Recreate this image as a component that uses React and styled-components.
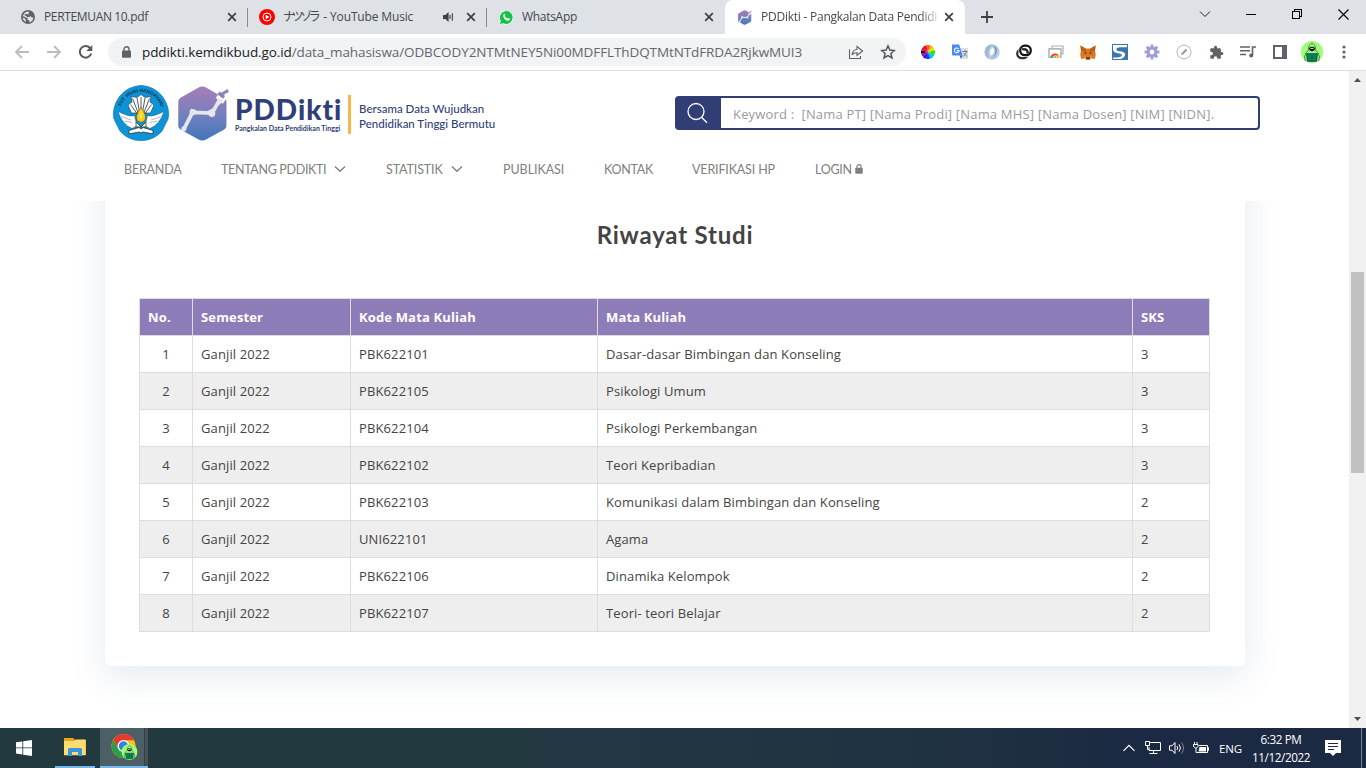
import React from "react";
import styled, { createGlobalStyle, css } from "styled-components";

const GlobalStyle = createGlobalStyle`
  * { box-sizing: border-box; }
  html, body { margin: 0; padding: 0; overflow: hidden; background: #fff; }
  svg { display: block; flex: none; }
`;

const ui = css`
  font-family: "Open Sans", "Noto Sans CJK JP", sans-serif;
`;

const Desktop = styled.div`
  ${ui}
  width: 1366px;
  height: 768px;
  display: flex;
  flex-direction: column;
  overflow: hidden;
  background: #fff;
`;

/* ---------- browser chrome ---------- */

const TabStrip = styled.div`
  display: flex;
  height: 34px;
  flex: none;
  padding-left: 8px;
  background: #dee1e6;
`;

const Tab = styled.div`
  position: relative;
  display: flex;
  align-items: center;
  width: ${(p) => p.$width}px;
  height: 34px;
  padding: 0 11px 0 ${(p) => p.$pad}px;
  border-radius: ${(p) => (p.$active ? "8px 8px 0 0" : "0")};
  background: ${(p) => (p.$active ? "#fff" : "transparent")};
  &::after {
    content: "";
    display: ${(p) => (p.$line ? "block" : "none")};
    position: absolute;
    right: 0;
    top: 8px;
    width: 1px;
    height: 19px;
    background: #85888d;
  }
`;

const TabTitle = styled.span`
  flex: 1;
  margin-left: ${(p) => p.$gap}px;
  white-space: nowrap;
  font-size: 12px;
  line-height: 18px;
  letter-spacing: ${(p) => p.$ls || 0}px;
  color: #45494d;
  ${(p) =>
    p.$fade &&
    css`
      mask-image: linear-gradient(90deg, #000 87%, transparent 99%);
    `}
`;

const Kana = styled.span`
  letter-spacing: -3.4px;
  margin-right: 3px;
`;

const TabAudio = styled.span`
  margin-right: 12px;
`;

const NewTab = styled.div`
  display: flex;
  align-items: center;
  padding-left: 16px;
`;

const WindowControls = styled.div`
  display: flex;
  margin-left: auto;
`;

const WindowButton = styled.div`
  display: flex;
  align-items: center;
  justify-content: center;
  width: 46px;
  height: 28px;
`;

const Toolbar = styled.div`
  display: flex;
  align-items: center;
  height: 37px;
  flex: none;
  padding: 0 6px 0 14px;
  border-bottom: 1px solid #dadce0;
  background: #fff;
`;

const NavButtons = styled.div`
  display: flex;
  gap: 16px;
  width: 94px;
`;

const AddressBar = styled.div`
  display: flex;
  align-items: center;
  width: 798px;
  height: 28px;
  padding: 0 10px 0 10px;
  border-radius: 14px;
  background: #f1f3f4;
`;

const LockSlot = styled.div`
  display: flex;
  width: 16px;
  justify-content: center;
`;

const Url = styled.span`
  flex: 1;
  margin-left: 8px;
  white-space: nowrap;
  font-size: 13.5px;
  line-height: 20px;
  letter-spacing: -0.1px;
  color: #64686d;
`;

const Host = styled.span`
  color: #202124;
`;

const AddressActions = styled.div`
  display: flex;
  gap: 16px;
`;

const Extensions = styled.div`
  display: flex;
  margin-left: 6px;
`;

const Slot = styled.div`
  display: flex;
  align-items: center;
  justify-content: center;
  width: 32px;
  height: 28px;
`;

/* ---------- page ---------- */

const Viewport = styled.div`
  display: flex;
  height: 657px;
  flex: none;
`;

const Page = styled.div`
  display: flex;
  flex-direction: column;
  width: 1349px;
  overflow: hidden;
`;

const SiteHeader = styled.header`
  height: 130px;
  flex: none;
  padding: 12px 89px 0 112px;
  background: #fff;
`;

const BrandRow = styled.div`
  display: flex;
  height: 60px;
`;

const Brand = styled.div`
  display: flex;
  align-items: center;
  gap: 7px;
`;

const BrandName = styled.div`
  display: flex;
  justify-content: space-between;
  align-items: center;
  width: 116px;
  height: 60px;
  margin-left: -2px;
  white-space: nowrap;
  color: #313f78;
  font-family: Lato, sans-serif;
`;

const BrandRule = styled.div`
  width: 3px;
  height: 39px;
  margin-top: 2px;
  background: #fbb64b;
`;

const BrandTitle = styled.div`
  font-size: 28px;
  line-height: 30px;
  font-weight: 900;
  letter-spacing: 1px;
`;

const BrandSub = styled.div`
  font-size: 7px;
  line-height: 9px;
  font-weight: 700;
`;

const Slogan = styled.div`
  padding-top: 5px;
  margin-left: 1px;
  white-space: nowrap;
  font-family: Lato, sans-serif;
  font-size: 11.5px;
  line-height: 15px;
  font-weight: 500;
  color: #313f78;
`;

const Search = styled.div`
  display: flex;
  width: 585px;
  height: 34px;
  margin: 13px 0 0 auto;
  border: 2px solid #313e76;
  border-radius: 4px;
  background: #fff;
`;

const SearchButton = styled.div`
  display: flex;
  align-items: center;
  width: 44px;
  padding-left: 10px;
  background: #313e76;
`;

const Placeholder = styled.span`
  padding-left: 12px;
  white-space: pre;
  font-size: 13px;
  line-height: 32px;
  letter-spacing: 0.18px;
  color: #9b9b9b;
`;

const Menu = styled.nav`
  display: flex;
  gap: 40px;
  padding: 16px 0 0 12px;
`;

const MenuItem = styled.div`
  display: flex;
  align-items: center;
  justify-content: space-between;
  width: ${(p) => p.$width}px;
  height: 20px;
  white-space: nowrap;
  font-family: Lato, sans-serif;
  font-size: 12.5px;
  letter-spacing: ${(p) => p.$ls}px;
  color: #808080;
`;

const Content = styled.main`
  flex: 1;
  overflow: hidden;
  padding-left: 105px;
`;

const Card = styled.section`
  width: 1140px;
  height: 525px;
  margin-top: -60px;
  padding: 77px 34px 0;
  border-radius: 5px;
  background: #fff;
  box-shadow: 0 10px 36px rgba(65, 105, 150, 0.14);
`;

const Title = styled.h2`
  margin: 0 0 47px;
  text-align: center;
  font-family: Lato, sans-serif;
  font-size: 24px;
  line-height: 33px;
  font-weight: 700;
  letter-spacing: 0.8px;
  color: #444;
`;

const Table = styled.table`
  width: 1071px;
  table-layout: fixed;
  border-collapse: collapse;
  font-size: 13px;
  line-height: 20px;
  color: #444;
`;

const Column = styled.col`
  width: ${(p) => p.$width}px;
`;

const cell = css`
  height: 37px;
  padding: 0 8px;
  border: 1px solid #dddddd;
  white-space: nowrap;
`;

const HeadCell = styled.th`
  ${cell}
  text-align: left;
  font-weight: 700;
  letter-spacing: 0.15px;
  color: #fff;
  background: #8c7db9;
`;

const Row = styled.tr`
  background: ${(p) => (p.$striped ? "#eeeeee" : "#fff")};
`;

const Cell = styled.td`
  ${cell}
  text-align: ${(p) => (p.$center ? "center" : "left")};
  letter-spacing: 0.12px;
`;

const Scrollbar = styled.div`
  display: flex;
  flex-direction: column;
  align-items: center;
  width: 17px;
  padding: 7px 0 7px;
  background: #f1f1f1;
`;

const Thumb = styled.div`
  width: 13px;
  height: 201px;
  margin: 190px 0 auto;
  background: #c1c1c1;
`;

/* ---------- taskbar ---------- */

const Taskbar = styled.div`
  display: flex;
  height: 40px;
  flex: none;
  background: linear-gradient(90deg, #21383f 0%, #22393f 38%, #223743 40%, #1f3241 68%, #1c2b42 80%, #1b2944 84%, #1b2942 100%);
`;

const TaskButton = styled.div`
  display: flex;
  align-items: center;
  justify-content: center;
  width: ${(p) => p.$width}px;
  height: 40px;
  padding-left: ${(p) => (p.$active ? 2 : 0)}px;
  margin-left: ${(p) => p.$gap || 0}px;
  background: ${(p) => (p.$active ? "linear-gradient(90deg, #4d5f66 44px, #343f45 44px, #343f45 45px, #455358 45px)" : "none")};
  border-bottom: ${(p) => (p.$open ? "2px solid #76b9ed" : "0")};
`;

const Tray = styled.div`
  display: flex;
  align-items: center;
  margin-left: auto;
  color: #fff;
`;

const TrayIcon = styled.div`
  margin-right: ${(p) => p.$gap}px;
`;

const Language = styled.span`
  width: 32px;
  font-size: 11.5px;
  letter-spacing: -0.2px;
`;

const Clock = styled.div`
  width: 60px;
  margin-right: 14px;
  text-align: center;
  white-space: nowrap;
  font-size: 11.7px;
  line-height: 18px;
  letter-spacing: -0.38px;
`;

const ShowDesktop = styled.div`
  width: 5px;
  height: 40px;
  margin-left: 20px;
  border-left: 1px solid #76808f;
`;

/* ---------- icons ---------- */

const Globe = () => (
  <svg width="14" height="14" viewBox="0 0 14 14">
    <circle cx="7" cy="7" r="7" fill="#5f6368" />
    <path d="M7.6 1.6 8 3.4 6.5 4.6 7 6.2 9.6 6 10.6 7.6 12.4 7.4C12.3 9.8 10.6 11.8 8.4 12.3L8.2 10.6 6.6 9.6 6.4 8 2 6.2C2.4 3.8 4.6 1.5 7.6 1.6z" fill="#dee1e6" />
    <path d="M1.6 7.6 4.4 8.8 5 12Q2 11 1.6 7.6z" fill="#dee1e6" />
    <path d="M3 4.8 6.8 7.2 9.4 6.6 7.4 4.6 5 4z" fill="#5f6368" />
  </svg>
);

const TabClose = () => (
  <svg width="10" height="10" viewBox="0 0 10 10">
    <path d="M1.2 1.2 8.8 8.8M8.8 1.2 1.2 8.8" stroke="#3c4043" strokeWidth="1.7" />
  </svg>
);

const MusicLogo = () => (
  <svg width="16" height="16" viewBox="0 0 16 16">
    <circle cx="8" cy="8" r="8" fill="#f00" />
    <circle cx="8" cy="8" r="4" fill="none" stroke="#fff" strokeWidth="1" />
    <path d="M6.7 5.8 10.4 8 6.7 10.2z" fill="#fff" />
  </svg>
);

const AudioIcon = () => (
  <svg width="11" height="12" viewBox="0 0 11 12">
    <path d="M0 4h2.4L5.6 1v10L2.4 8H0z" fill="#3c4043" />
    <path d="M7 4v4M9.3 2.3v7.4" stroke="#3c4043" strokeWidth="1.1" />
  </svg>
);

const WhatsAppLogo = () => (
  <svg width="15" height="15" viewBox="0 0 15 15">
    <path d="M.2 14.8 1.2 11A7 7 0 1 1 4 13.8z" fill="#fff" />
    <path d="M1 14 1.8 10.8A6.4 6.4 0 1 1 4.4 13.200z" fill="#13c443" />
    <path d="M4.6 4.2C5.3 3.4 5.8 3.7 6.3 5.2L5.8 6.1Q6.6 7.7 8.4 8.6L9.3 7.9 11 8.8C11 10.5 9.3 11.1 7.6 10.4 5.4 9.4 3.6 6.8 4.6 4.2z" fill="#fff" />
  </svg>
);

const HexMark = ({ width, height }) => (
  <svg width={width} height={height} viewBox="0 0 52 56">
    <defs>
      <linearGradient id="hex" x1="0" y1="0" x2="0" y2="1">
        <stop offset="0" stopColor="#a67eb7" />
        <stop offset="0.55" stopColor="#7280bd" />
        <stop offset="1" stopColor="#3f75ba" />
      </linearGradient>
    </defs>
    <path d="M21 1.600q3.800-2.200 7.600 0L41 8.600 38.500 12l7.200 6 3-4.500q.7 1.200.7 2.700v24q0 2.600-2.300 4L28.600 54.400q-3.800 2.200-7.600 0L2.600 44.200Q.3 42.800.3 40.200V16q0-2.700 2.300-4.100z" fill="url(#hex)" />
    <path d="m42.800 9.400 8.400-5" stroke="#9b81ba" strokeWidth="3.200" />
    <path d="M41.300 7 47 11.600" stroke="#8b80bb" strokeWidth="3.400" />
    <path d="M6 43.800 14.800 26.800 34.800 27.600 43 13" fill="none" stroke="#e6e6ed" strokeWidth="3.800" strokeLinejoin="round" />
    <path d="m11.500 31 2-8 7 3zM29 26l7-3.500 1.500 7.500zM39.500 18l1.500-6.500 5.500 3.500-4 4z" fill="#e6e6ed" />
    <circle cx="15" cy="26.500" r="3.200" fill="#e6e6ed" />
    <circle cx="34.500" cy="28" r="3.500" fill="#e6e6ed" />
    <circle cx="6" cy="43.500" r="2.600" fill="#e6e6ed" />
  </svg>
);

const Plus = () => (
  <svg width="12" height="12" viewBox="0 0 12 12">
    <path d="M6 0v12M0 6h12" stroke="#3c4043" strokeWidth="1.8" />
  </svg>
);

const ChevronThin = () => (
  <svg width="12" height="8" viewBox="0 0 12 8"><path d="M1 1.5 6 6.5 11 1.5" fill="none" stroke="#222" /></svg>
);
const Minimize = () => (
  <svg width="10" height="10" viewBox="0 0 10 10"><path d="M0 5.500h10" stroke="#000" /></svg>
);
const Restore = () => (
  <svg width="10" height="10" viewBox="0 0 10 10" shapeRendering="crispEdges">
    <path d="M.5 2.5h7v7h-7zM2.5 2.5v-2h7v7h-2" fill="none" stroke="#000" />
  </svg>
);
const WindowClose = () => (
  <svg width="11" height="11" viewBox="0 0 11 11"><path d="M.5.5l10 10M10.500.5l-10 10" stroke="#000" strokeWidth="1.1" /></svg>
);

const Arrow = ({ forward }) => (
  <svg width="16" height="14" viewBox="0 0 16 14">
    <path d={forward ? "M1 7h13M8 1l6 6-6 6" : "M15 7H2M8 1 2 7l6 6"} fill="none" stroke="#babcbe" strokeWidth="1.8" />
  </svg>
);

const Reload = () => (
  <svg width="16" height="14" viewBox="0 0 16 14">
    <path d="M13.2 8.5A5.8 5.8 0 1 1 12 3" fill="none" stroke="#55595e" strokeWidth="2" />
    <path d="M14.300 0v6H8.300z" fill="#55595e" />
  </svg>
);

const Padlock = ({ width, height, color }) => (
  <svg width={width} height={height} viewBox="0 0 9 12">
    <rect y="4.500" width="9" height="7.300" rx="1" fill={color} />
    <path d="M2 5V3.200a2.500 2.500 0 0 1 5 0V5" fill="none" stroke={color} strokeWidth="1.400" />
  </svg>
);

const Share = () => (
  <svg width="16" height="16" viewBox="0 0 16 16" fill="none" stroke="#5f6368" strokeWidth="1.1">
    <path d="M1.5 5.5v9h11V12" />
    <path d="M9 2.5 14.6 7 9 11.3V8.8Q5.500 8.600 4 11 4.600 5.800 9 5.200z" />
  </svg>
);

const Star = () => (
  <svg width="16" height="16" viewBox="0 0 16 16">
    <path d="M8 1.8 9.8 6.100 14.400 6.500 10.900 9.500 12 14 8 11.600 4 14 5.100 9.500 1.600 6.500 6.200 6.100z" fill="none" stroke="#55595e" strokeWidth="1.500" />
  </svg>
);

const wheelColors = ["#ff9f00", "#d9f000", "#36d900", "#00d98c", "#00b4ff", "#0044e8", "#4000dd", "#a600cf", "#111", "#f00060", "#ff0000", "#ff5a00"];
const ColorWheel = () => (
  <svg width="14" height="14" viewBox="-7 -7 14 14">
    {wheelColors.map((color, i) => (
      <path key={color} d="M0 0-1.850-6.750A7 7 0 0 1 1.850-6.750z" fill={color} transform={`rotate(${i * 30 + 30})`} />
    ))}
  </svg>
);

const Translate = () => (
  <svg width="16" height="16" viewBox="0 0 16 16">
    <path d="M6 4h10v11H9z" fill="#dcdfe3" />
    <path d="M0 .5h7.200l3.400 11H1Q0 11.500 0 10.500z" fill="#4a8af4" />
    <path d="M7.500 11.500h3.100L9 15z" fill="#3267d6" />
    <path d="M6.400 4.800A2.300 2.300 0 1 0 7 6.600H4.800" fill="none" stroke="#fff" strokeWidth="1.100" />
    <path d="M10.500 7.500h5M13 6v1.500M14.600 7.500Q13.800 11 11.400 12.200M11.400 8.800 15 12.500" fill="none" stroke="#6c7680" strokeWidth=".9" />
  </svg>
);

const Swirl = () => (
  <svg width="16" height="16" viewBox="0 0 16 16">
    <circle cx="8" cy="8" r="7.700" fill="#b6cbe0" />
    <path d="M8 .5a7.500 7.500 0 0 0-3 14Q1.800 8 8 .5z" fill="#9db7d0" />
    <path d="M8 .8Q15 3 12 10 10 14 5 14.500A7.500 7.500 0 0 0 8 .8z" fill="#6c92ba" />
    <path d="M8.800 3.500Q4 6 7 11.800 12.300 8 8.800 3.500z" fill="#fff" />
  </svg>
);

const Rings = () => (
  <svg width="16" height="16" viewBox="0 0 16 16" fill="none" strokeWidth="2.200">
    <rect x="1.200" y="5.200" width="10.600" height="9" rx="4.500" stroke="#333" />
    <rect x="4.200" y="1.600" width="10.600" height="9.600" rx="4.600" stroke="#fff" strokeWidth="3.400" />
    <rect x="4.200" y="1.600" width="10.600" height="9.600" rx="4.600" stroke="#111" />
    <path d="M6.500 5.200h1.300q4 0 4 4.200" stroke="#333" />
  </svg>
);

const RemoteDesktop = () => (
  <svg width="16" height="16" viewBox="0 0 16 16">
    <path d="M4 4V2h11v8h-2" fill="#fff" stroke="#aeb0b3" strokeWidth="1.200" />
    <path d="M1 14V4.800h12V14" fill="#fff" stroke="#999c9f" strokeWidth="1.200" />
    <path d="M2.500 14a4.600 4.600 0 0 1 9.200 0z" fill="#fbbc05" />
    <path d="M2.500 14a4.600 4.600 0 0 1 8.200-2.800H7z" fill="#ea4335" />
    <path d="M2.500 14q0-2 1-3l2 3z" fill="#34a853" />
    <path d="M5.100 14a2 2 0 0 1 4 0z" fill="#4285f4" stroke="#fff" strokeWidth=".6" />
  </svg>
);

const Fox = () => (
  <svg width="16" height="15" viewBox="0 0 16 15">
    <path d="M.5.5 6 3.500h4L15.500.5 15 6l.8 3.500-1 4.500-3.600-.8L9.500 15h-3l-1.700-1.800L1.200 14 .2 9.500 1 6z" fill="#e2761b" />
    <path d="M.5.5 6 4.500 6.500 7 1 6zM15.500.5 10 4.500 9.500 7 15 6z" fill="#b9601f" />
    <path d="m3.600 8 2.500-.7.5 2zM12.400 8l-2.500-.7-.5 2z" fill="#35384a" />
    <path d="M6 12.300h4l-.4 1.800H6.400z" fill="#4a3b35" />
    <path d="M4 10.500 6 12.300 5.300 13zM12 10.500l-2 1.800.7.7z" fill="#cbb9ad" />
  </svg>
);

const BlueS = () => (
  <svg width="16" height="16" viewBox="0 0 16 16">
    <rect width="16" height="16" fill="#3b76aa" />
    <path d="M1 1h14v2.200H9Q4.400 3 4.400 5.400 4.400 7 8.400 7.300 14 8 13 11.500 12.300 13.600 9 15H1v-1.500Q9.800 13.600 9.800 11.200 9.800 9.600 5.800 9.200 1 8.400 1 5.500z" fill="#fff" />
  </svg>
);

const Gear = () => (
  <svg width="16" height="16" viewBox="-8 -8 16 16">
    {[0, 45, 90, 135, 180, 225, 270, 315].map((angle) => (
      <rect key={angle} x="-1.500" y="-7.500" width="3" height="4" rx=".6" fill="#a5a1de" transform={`rotate(${angle})`} />
    ))}
    <circle r="3.900" fill="none" stroke="#9f9bdb" strokeWidth="3" />
  </svg>
);

const PencilCircle = () => (
  <svg width="16" height="16" viewBox="0 0 16 16">
    <circle cx="8" cy="8" r="7" fill="#fff" stroke="#b5b5b5" />
    <path d="M5 11.200 5.600 9 9.900 4.700l1.500 1.500-4.300 4.400z" fill="#999" />
  </svg>
);

const Puzzle = () => (
  <svg width="15" height="15" viewBox="0 0 24 24">
    <path d="M20.500 11H19V7c0-1.100-.9-2-2-2h-4V3.500a2.500 2.500 0 0 0-5 0V5H4c-1.100 0-1.990.9-1.990 2v3.800H3.500c1.490 0 2.700 1.210 2.700 2.700s-1.210 2.700-2.700 2.700H2V20c0 1.100.9 2 2 2h3.800v-1.500c0-1.490 1.210-2.700 2.700-2.700s2.700 1.210 2.700 2.700V22H17c1.100 0 2-.9 2-2v-4h1.500a2.500 2.500 0 0 0 0-5z" fill="#5f6368" />
  </svg>
);

const Queue = () => (
  <svg width="16" height="14" viewBox="0 0 16 14">
    <path d="M0 2h10M0 5.700h10M0 9.400h6" stroke="#5f6368" strokeWidth="1.500" />
    <path d="M12.500 10V2H16" fill="none" stroke="#5f6368" strokeWidth="1.600" />
    <circle cx="11.200" cy="10.600" r="2" fill="#5f6368" />
  </svg>
);

const SidePanel = () => (
  <svg width="14" height="14" viewBox="0 0 14 14">
    <path d="M1 1h12v12H1z" fill="#fff" stroke="#5f6368" strokeWidth="2" />
    <path d="M9 1h4v12H9z" fill="#5f6368" />
  </svg>
);

const Hacker = ({ size, x, y }) => (
  <svg x={x} y={y} width={size} height={size} viewBox="0 0 22 22">
    <circle cx="11" cy="11" r="11" fill="#9dfc79" />
    <path d="M11 2Q7 4 7.500 9.500 4.500 10.500 3.500 16L4.500 20M11 2Q15 4 14.500 9.500 17.500 10.500 18.500 16L17.500 20" fill="none" stroke="#3f7a35" strokeWidth=".9" />
    <path d="M8 7Q11 4.500 14 7L13.600 9 11 10.800 8.400 9z" fill="#111" />
    <path d="M9.300 7h3.400v.9H9.300z" fill="#f0c4a8" />
    <path d="M9.600 10.500h2.800l-1.400 1z" fill="#e8f7e2" />
    <path d="M5.600 12.700h10.800l-.8 7.600H6.400z" fill="#07815c" stroke="#06513a" strokeWidth=".9" />
    <circle cx="11" cy="16.400" r=".9" fill="#0b3e2c" />
  </svg>
);

const Dots = () => (
  <svg width="4" height="14" viewBox="0 0 4 14" fill="#5f6368">
    <circle cx="2" cy="2" r="1.600" /><circle cx="2" cy="7" r="1.600" /><circle cx="2" cy="12" r="1.600" />
  </svg>
);

const EmblemText = styled.text`
  font-family: "Liberation Sans", sans-serif;
  font-size: 4.8px;
  font-weight: 700;
  text-anchor: middle;
  fill: #12313f;
`;

const Emblem = () => (
  <svg width="58" height="58" viewBox="0 0 58 58">
    <defs><path id="arc" d="M10.500 39A21 21 0 1 1 47.500 39" /></defs>
    <path d="M29 1.400Q43 2.500 50.500 12.500 58.500 24 56 35L50 47Q42 56.500 29 56.600 16 56.500 8 47L2 35Q-.5 24 7.500 12.500 15 2.500 29 1.400z" fill="#0d93d8" stroke="#147fae" strokeWidth=".8" />
    <EmblemText><textPath href="#arc" startOffset="50%">TUT WURI HANDAYANI</textPath></EmblemText>
    <path d="M29 10.500 33 13.500 39 12.500 38 18 42 21 38.500 29H19.500L16 21l4-3-1-5.500 6 1z" fill="#fff" stroke="#243944" strokeWidth=".6" />
    <path d="M29 13v17M25 14l3 17M33 14l-3 17M20.500 14.500 27 31M37.500 14.500 31 31M18.500 20.500 26 31M39.500 20.500 32 31" stroke="#27333a" strokeWidth=".8" />
    <path d="M6 27.500 13 30.500Q19 33 22.500 31.500L25 42 20 44.500Q10 40.500 6 27.500zM52 27.500 45 30.500Q39 33 35.500 31.500L33 42l5 2.500Q48 40.500 52 27.500z" fill="#fff" stroke="#184c61" strokeWidth=".5" />
    <path d="M9 32.500 19 36M12 37l8 1.500M49 32.500 39 36M46 37l-8 1.500" stroke="#5a7986" strokeWidth=".5" />
    <path d="M29 23.500Q35 31 33 36q-4 4.500-8 0-2-5 4-12.500z" fill="#f8cf19" stroke="#705817" strokeWidth=".7" />
    <path d="M29 27q2 6 0 8-2-2 0-8z" fill="#ffe95d" />
    <path d="m24 38 5 5 5-5v5h-10z" fill="#f8e6a4" stroke="#333" strokeWidth=".7" />
    <path d="M17 46.500 27 43.500 29 45l2-1.500 10 3v3.300L30.500 48 29 49l-1.500-1L17 49.800z" fill="#fff" stroke="#222" strokeWidth=".7" />
  </svg>
);

const Magnifier = () => (
  <svg width="22" height="22" viewBox="0 0 22 22" fill="none" stroke="#fff" strokeWidth="1.300">
    <circle cx="9" cy="9.500" r="8" /><path d="m14.800 15.500 5.200 5.200" />
  </svg>
);

const MenuChevron = () => (
  <svg width="12" height="8" viewBox="0 0 12 8"><path d="M1 1.500 6 6.300 11 1.500" fill="none" stroke="#808080" strokeWidth="1.400" /></svg>
);

const ScrollArrow = ({ down }) => (
  <svg width="7" height="4" viewBox="0 0 7 4"><path d={down ? "M0 0h7L3.500 4z" : "M0 4h7L3.500 0z"} fill="#505050" /></svg>
);

const WindowsLogo = () => (
  <svg width="16" height="16" viewBox="0 0 16 16" fill="#fff">
    <path d="M0 2.300 6.400 1.400V7.400H0zM7.200 1.300 16 0v7.400H7.200zM0 8.300h6.400v6.100L0 13.500zM7.200 8.300H16V16l-8.800-1.300z" />
  </svg>
);

const Folder = () => (
  <svg width="22" height="18" viewBox="0 0 22 18">
    <path d="M0 0h9l1.500 1.500H21.500V17H0z" fill="#e8a81c" />
    <path d="M0 3h10l2-1.300h9.800V17.300H0z" fill="#ffdc70" />
    <path d="M4 18v-6.800q0-1.200 1.200-1.200h11.600Q18 10 18 11.200V18h-4v-4H8v4z" fill="#3a96dd" />
  </svg>
);

const ChromeLogo = () => (
  <svg width="28" height="26" viewBox="0 0 28 26">
    <circle cx="12.500" cy="12" r="12" fill="#fbc116" />
    <path d="M12.500 0A12 12 0 0 1 23 6.300H12.500l-5 8.500L2.200 5.900A12 12 0 0 1 12.500 0z" fill="#e33b2e" />
    <path d="M2.100 6A12 12 0 0 0 12 24l5.200-9.200H7.500z" fill="#2a9e49" />
    <circle cx="12.500" cy="12" r="6" fill="#fff" />
    <circle cx="12.500" cy="12" r="4.700" fill="#337fe8" />
    <Hacker x="10.500" y="10" size={16} />
  </svg>
);

const TrayChevron = () => (
  <svg width="12" height="8" viewBox="0 0 12 8"><path d="M.5 6.800 6 1.300l5.500 5.500" fill="none" stroke="#fff" strokeWidth="1.200" /></svg>
);
const Network = () => (
  <svg width="16" height="14" viewBox="0 0 16 14" fill="none" stroke="#fff">
    <path d="M5 1.500h10.500v8H4V6M4.500 12.500h8M8.500 9.500v3M.5.500h4v4h-4zM2.500 4.500v4h2" />
  </svg>
);
const Speaker = () => (
  <svg width="17" height="14" viewBox="0 0 17 14" fill="none" stroke="#fff">
    <path d="M.5 4.800H3L6 1.500v11L3 9.200H.5z" />
    <path d="M8 5q1.400 2 0 4M10 3.300q3 3.700 0 7.400" />
    <path d="M12.500 1.500q4 5.500 0 11" stroke="#7c8696" />
  </svg>
);
const Battery = () => (
  <svg width="16" height="13" viewBox="0 0 16 13">
    <path d="M6 3.500h8.500v7H5.500M14.500 5.500h1v3h-1" fill="none" stroke="#fff" />
    <path d="M6.500 5h6.500v4.500H5.500z" fill="#fff" />
    <path d="M1.500 0v2.500M4 0v2.500M.5 2.500h4.500v2L3.500 6h-1L.5 4.500zM3 6v4.500h3" fill="none" stroke="#fff" />
  </svg>
);
const Notification = () => (
  <svg width="16" height="16" viewBox="0 0 16 16">
    <path d="M0 0h16v13h-5l-3 3-3-3H0z" fill="#fff" />
    <path d="M3 3.500h10M3 6.500h10M3 9.500h6" stroke="#1b2944" />
  </svg>
);

/* ---------- data ---------- */

const columns = [
  { label: "No.", width: 53 },
  { label: "Semester", width: 158 },
  { label: "Kode Mata Kuliah", width: 247 },
  { label: "Mata Kuliah", width: 535 },
  { label: "SKS", width: 77 },
];

const courses = [
  ["PBK622101", "Dasar-dasar Bimbingan dan Konseling", 3],
  ["PBK622105", "Psikologi Umum", 3],
  ["PBK622104", "Psikologi Perkembangan", 3],
  ["PBK622102", "Teori Kepribadian", 3],
  ["PBK622103", "Komunikasi dalam Bimbingan dan Konseling", 2],
  ["UNI622101", "Agama", 2],
  ["PBK622106", "Dinamika Kelompok", 2],
  ["PBK622107", "Teori- teori Belajar", 2],
];

const menu = [
  { label: "BERANDA", width: 57, ls: -0.2 },
  { label: "TENTANG PDDIKTI", width: 125, ls: -0.33, dropdown: true },
  { label: "STATISTIK", width: 77, ls: -0.12, dropdown: true },
  { label: "PUBLIKASI", width: 61, ls: -0.05 },
  { label: "KONTAK", width: 48, ls: -0.25 },
  { label: "VERIFIKASI HP", width: 83, ls: -0.15 },
  { label: "LOGIN", width: 48, ls: -0.3, lock: true },
];

const extensionIcons = [ColorWheel, Translate, Swirl, Rings, RemoteDesktop, Fox, BlueS, Gear, PencilCircle, Puzzle, Queue, SidePanel];
const windowIcons = [ChevronThin, Minimize, Restore, WindowClose];

export default function App() {
  return (
    <Desktop>
      <GlobalStyle />
      <TabStrip>
        <Tab $width={240} $pad={13} $line>
          <Globe />
          <TabTitle $gap={9} $ls={-0.35}>PERTEMUAN 10.pdf</TabTitle>
          <TabClose />
        </Tab>
        <Tab $width={239} $pad={11} $line>
          <MusicLogo />
          <TabTitle $gap={8} $ls={-0.15}><Kana>ナツゾラ</Kana> - YouTube Music</TabTitle>
          <TabAudio><AudioIcon /></TabAudio>
          <TabClose />
        </Tab>
        <Tab $width={238} $pad={12}>
          <WhatsAppLogo />
          <TabTitle $gap={8} $ls={-0.3}>WhatsApp</TabTitle>
          <TabClose />
        </Tab>
        <Tab $width={240} $pad={13} $active>
          <HexMark width={14} height={15} />
          <TabTitle $gap={9} $ls={-0.24} $fade>PDDikti - Pangkalan Data Pendidi</TabTitle>
          <TabClose />
        </Tab>
        <NewTab><Plus /></NewTab>
        <WindowControls>
          {windowIcons.map((Icon, i) => (
            <WindowButton key={i}><Icon /></WindowButton>
          ))}
        </WindowControls>
      </TabStrip>
      <Toolbar>
        <NavButtons>
          <Arrow />
          <Arrow forward />
          <Reload />
        </NavButtons>
        <AddressBar>
          <LockSlot><Padlock width={9} height={12} color="#5f6368" /></LockSlot>
          <Url><Host>pddikti.kemdikbud.go.id</Host>/data_mahasiswa/ODBCODY2NTMtNEY5Ni00MDFFLThDQTMtNTdFRDA2RjkwMUI3</Url>
          <AddressActions><Share /><Star /></AddressActions>
        </AddressBar>
        <Extensions>
          {extensionIcons.map((Icon, i) => (
            <Slot key={i}><Icon /></Slot>
          ))}
          <Slot><Hacker size={22} /></Slot>
          <Slot><Dots /></Slot>
        </Extensions>
      </Toolbar>
      <Viewport>
        <Page>
          <SiteHeader>
            <BrandRow>
              <Brand>
                <Emblem />
                <HexMark width={53} height={55} />
                <BrandName>
                  <div>
                    <BrandTitle>PDDikti</BrandTitle>
                    <BrandSub>Pangkalan Data Pendidikan Tinggi</BrandSub>
                  </div>
                  <BrandRule />
                </BrandName>
                <Slogan>Bersama Data Wujudkan<br />Pendidikan Tinggi Bermutu</Slogan>
              </Brand>
              <Search>
                <SearchButton><Magnifier /></SearchButton>
                <Placeholder>{"Keyword :  [Nama PT] [Nama Prodi] [Nama MHS] [Nama Dosen] [NIM] [NIDN]."}</Placeholder>
              </Search>
            </BrandRow>
            <Menu>
              {menu.map((item) => (
                <MenuItem key={item.label} $width={item.width} $ls={item.ls}>
                  {item.label}
                  {item.dropdown && <MenuChevron />}
                  {item.lock && <Padlock width={8} height={10} color="#808080" />}
                </MenuItem>
              ))}
            </Menu>
          </SiteHeader>
          <Content>
            <Card>
              <Title>Riwayat Studi</Title>
              <Table>
                <colgroup>
                  {columns.map((c) => <Column key={c.label} $width={c.width} />)}
                </colgroup>
                <thead>
                  <tr>{columns.map((c) => <HeadCell key={c.label}>{c.label}</HeadCell>)}</tr>
                </thead>
                <tbody>
                  {courses.map(([code, name, credits], i) => (
                    <Row key={code} $striped={i % 2 === 1}>
                      <Cell $center>{i + 1}</Cell>
                      <Cell>Ganjil 2022</Cell>
                      <Cell>{code}</Cell>
                      <Cell>{name}</Cell>
                      <Cell>{credits}</Cell>
                    </Row>
                  ))}
                </tbody>
              </Table>
            </Card>
          </Content>
        </Page>
        <Scrollbar>
          <ScrollArrow />
          <Thumb />
          <ScrollArrow down />
        </Scrollbar>
      </Viewport>
      <Taskbar>
        <TaskButton $width={48}><WindowsLogo /></TaskButton>
        <TaskButton $width={40} $gap={7} $open><Folder /></TaskButton>
        <TaskButton $width={48} $gap={5} $open $active><ChromeLogo /></TaskButton>
        <Tray>
          <TrayIcon $gap={10}><TrayChevron /></TrayIcon>
          <TrayIcon $gap={8}><Network /></TrayIcon>
          <TrayIcon $gap={7}><Speaker /></TrayIcon>
          <TrayIcon $gap={10}><Battery /></TrayIcon>
          <Language>ENG</Language>
          <Clock>6:32 PM<br />11/12/2022</Clock>
          <Notification />
          <ShowDesktop />
        </Tray>
      </Taskbar>
    </Desktop>
  );
}
